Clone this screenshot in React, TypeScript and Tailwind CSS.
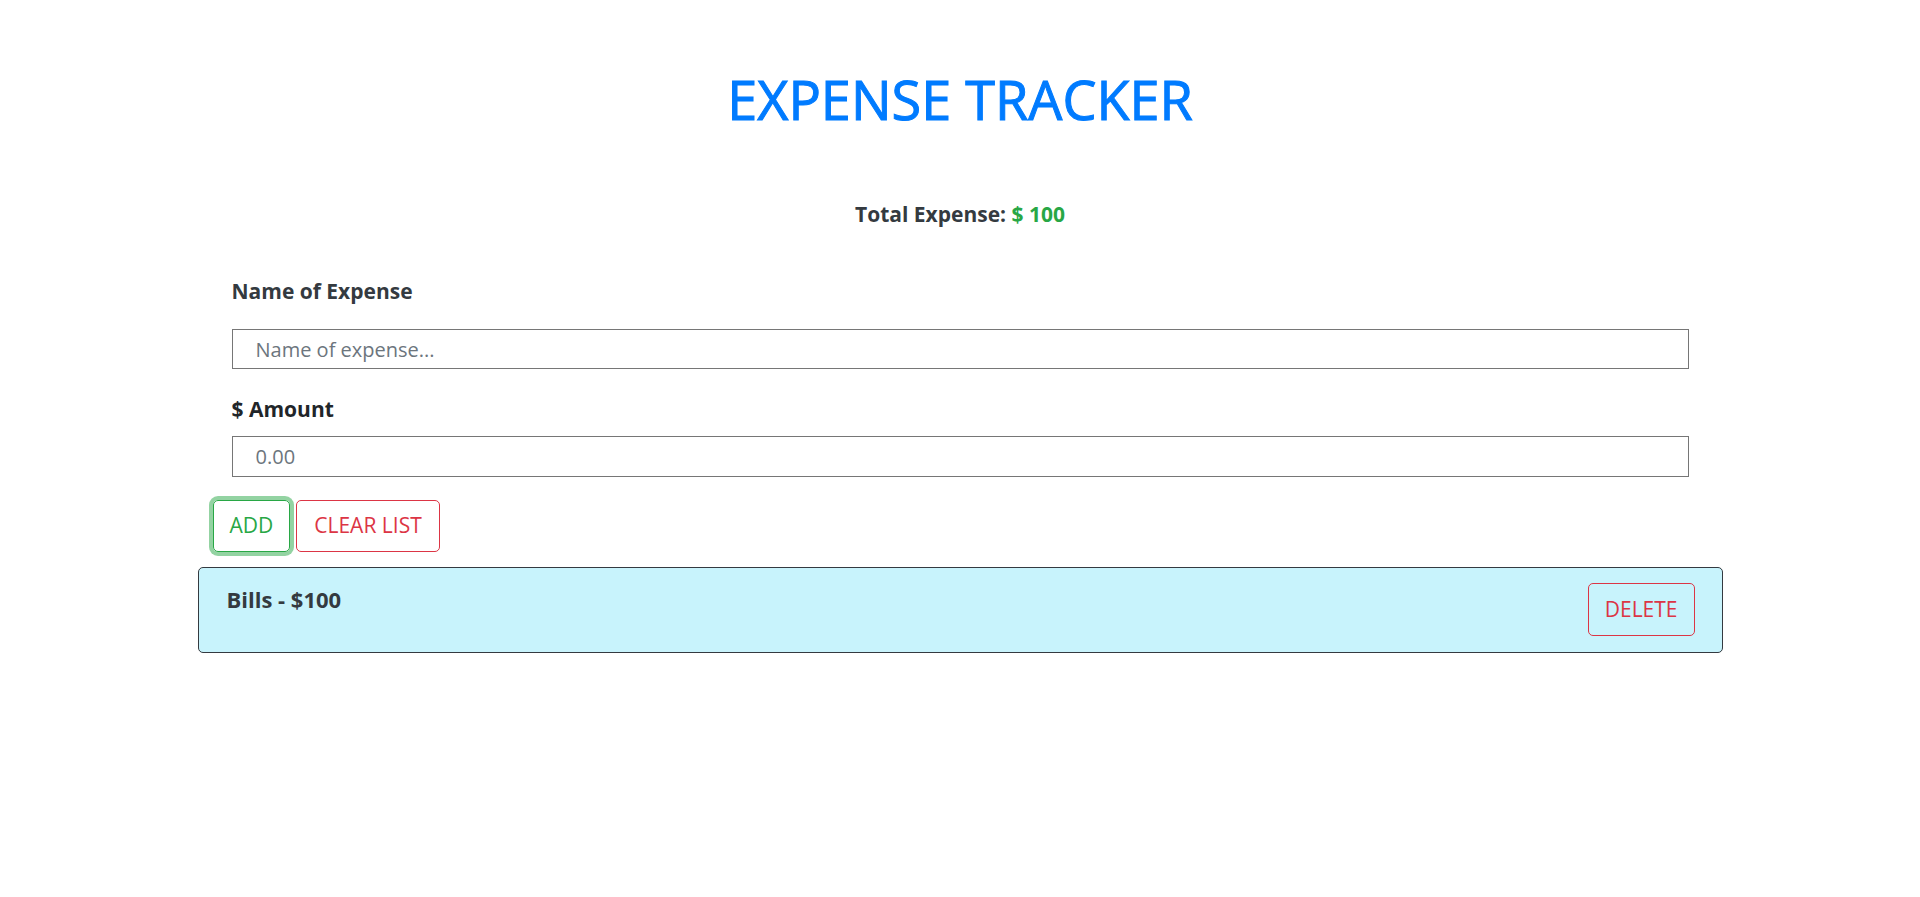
import { useState } from "react";

type Expense = { id: number; name: string; amount: number };

export default function App() {
  const [expenses, setExpenses] = useState<Expense[]>([{ id: 1, name: "Bills", amount: 100 }]);
  const [name, setName] = useState("");
  const [amount, setAmount] = useState("");

  const total = expenses.reduce((sum, e) => sum + e.amount, 0);

  const addExpense = () => {
    if (!name || !amount) return;
    setExpenses([...expenses, { id: Date.now(), name, amount: Number(amount) }]);
    setName("");
    setAmount("");
  };

  return (
    <div className="min-h-screen bg-white font-['Open_Sans',sans-serif] text-[#343a40]">
      <h1 className="pt-[71px] text-center text-[54px] leading-[56px] text-[#007bff] [-webkit-text-stroke:1px_#007bff]">
        EXPENSE TRACKER
      </h1>

      <p className="mt-[75px] text-center text-[21px] font-bold leading-[24px]">
        Total Expense: <span className="text-[#28a745]">$ {total}</span>
      </p>

      <div className="mx-auto mt-[53px] w-[1525px]">
        <div className="px-[34px]">
          <label className="block text-[21px] font-bold leading-[24px]">Name of Expense</label>
          <input
            className="mt-[26px] block h-[40px] w-full border border-[#767676] pl-[23px] text-[20px] text-[#495057] outline-none placeholder:text-[#6c757d]"
            placeholder="Name of expense..."
            value={name}
            onChange={(e) => setName(e.target.value)}
          />
          <label className="mt-[28px] block text-[21px] font-bold leading-[24px] text-[#212529]">$ Amount</label>
          <input
            className="mt-[15px] block h-[41px] w-full border border-[#767676] pl-[23px] text-[20px] text-[#495057] outline-none placeholder:text-[#6c757d]"
            placeholder="0.00"
            value={amount}
            onChange={(e) => setAmount(e.target.value)}
          />
        </div>

        <div className="ml-[15px] mt-[23px] flex gap-[6px]">
          <button
            className="h-[52px] rounded-[5px] border border-[#28a745] px-[16px] text-[21px] text-[#28a745] shadow-[0_0_0_4px_rgba(40,167,69,0.5)]"
            onClick={addExpense}
          >
            ADD
          </button>
          <button
            className="h-[52px] rounded-[5px] border border-[#dc3545] px-[17px] text-[21px] text-[#dc3545]"
            onClick={() => setExpenses([])}
          >
            CLEAR LIST
          </button>
        </div>

        <ul className="mt-[15px] flex flex-col gap-[10px]">
          {expenses.map((e) => (
            <li
              key={e.id}
              className="flex items-start justify-between rounded-[5px] border border-[#343a40] bg-[#c8f3fc] pb-[16px] pl-[28px] pr-[27px] pt-[15px]"
            >
              <span className="mt-[2px] text-[22px] font-bold leading-[28px]">
                {e.name} - ${e.amount}
              </span>
              <button
                className="h-[53px] rounded-[5px] border border-[#dc3545] px-[16px] text-[21px] text-[#dc3545]"
                onClick={() => setExpenses(expenses.filter((x) => x.id !== e.id))}
              >
                DELETE
              </button>
            </li>
          ))}
        </ul>
      </div>
    </div>
  );
}
